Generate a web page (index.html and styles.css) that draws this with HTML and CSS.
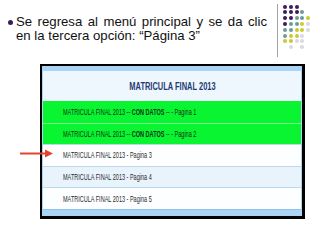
FILE: index.html
```html
<!DOCTYPE html>
<html lang="es">
<head>
<meta charset="utf-8">
<title>Página 3</title>
<link rel="stylesheet" href="styles.css">
</head>
<body>
<div class="slide">
  <div class="top">
    <div class="point">
      <span class="bullet"></span>
      <p class="text">Se regresa al menú principal y se da clic en la tercera opción: “Página 3”</p>
    </div>
    <div class="logo">
      <div class="dots">
        <span class="p"></span><span class="p"></span><span class="p"></span><span></span><span></span>
        <span class="p"></span><span class="p"></span><span class="p"></span><span class="t"></span><span></span>
        <span class="p"></span><span class="p"></span><span class="t"></span><span class="t"></span><span class="y"></span>
        <span class="p"></span><span class="t"></span><span class="t"></span><span class="y"></span><span class="g"></span>
        <span class="t"></span><span class="t"></span><span class="y"></span><span class="y"></span><span class="g"></span>
        <span class="t"></span><span class="y"></span><span class="y"></span><span class="g"></span><span></span>
        <span class="y"></span><span class="y"></span><span class="g"></span><span class="g"></span><span></span>
        <span></span><span class="g"></span><span></span><span class="g"></span><span></span>
      </div>
    </div>
  </div>
  <div class="shot">
    <div class="menu">
      <div class="strip"></div>
      <div class="title"><span>MATRICULA FINAL 2013</span></div>
      <div class="row green"><span class="lbl">MATRICULA FINAL 2013 -- <b>CON DATOS</b> -- - Pagina 1</span></div>
      <div class="row green"><span class="lbl">MATRICULA FINAL 2013 -- <b>CON DATOS</b> -- - Pagina 2</span></div>
      <div class="row"><span class="lbl">MATRICULA FINAL 2013 - Pagina 3</span></div>
      <div class="row alt"><span class="lbl">MATRICULA FINAL 2013 - Pagina 4</span></div>
      <div class="row"><span class="lbl">MATRICULA FINAL 2013 - Pagina 5</span></div>
      <div class="strip bottom"></div>
    </div>
  </div>
  <svg class="arrow" width="38" height="11" viewBox="0 0 38 11">
    <line x1="2" y1="5.5" x2="29" y2="5.5" stroke="#e5432b" stroke-width="2"/>
    <polygon points="35,5.5 27,1.5 27,9.5" fill="#e5432b"/>
  </svg>
</div>
</body>
</html>
```

FILE: styles.css
```css
body {
  margin: 0;
  width: 320px;
  height: 240px;
  overflow: hidden;
  background: #ffffff;
  font-family: "Liberation Sans", Arial, sans-serif;
}

.slide {
  position: relative;
  width: 320px;
  height: 240px;
}

.top {
  display: flex;
  height: 58px;
}

.point {
  display: flex;
  align-items: flex-start;
  padding: 15px 0 0 8px;
}

.bullet {
  flex: none;
  width: 5px;
  height: 5px;
  border-radius: 50%;
  background: #3d1b5b;
  margin: 5px 3px 0 0;
}

.text {
  margin: 0;
  width: 251px;
  font-size: 13.2px;
  line-height: 14px;
  text-align: justify;
  color: #111111;
}

.logo {
  margin: 4px 0 0 10px;
  height: 53px;
  border-left: 1px solid #a3a3a3;
  padding-left: 5px;
}

.dots {
  display: grid;
  grid-template-columns: repeat(5, 4px);
  grid-auto-rows: 4px;
  gap: 1.8px 1.75px;
  margin-top: 0.7px;
}

.dots span {
  width: 4px;
  height: 4px;
  border-radius: 50%;
}

.dots .p { background: #3d1b5b; }
.dots .t { background: #6b9c9c; }
.dots .y { background: #c9c934; }
.dots .g { background: #d9d9e3; }

.shot {
  margin: 6px 0 0 40px;
  width: 260px;
  border: 2px solid #000000;
  border-right-width: 3px;
  border-bottom-width: 3px;
}

.menu {
  border-left: 1px solid #a9d4f2;
  border-right: 1px solid #a9d4f2;
}

.strip {
  height: 5px;
  background: #a9d4f5;
}

.strip.bottom {
  height: 6px;
  border-top: 1px solid #8fc3ea;
}

.title {
  height: 30px;
  display: flex;
  align-items: center;
  justify-content: center;
  background: #eef7fe;
}

.title span {
  display: inline-block;
  white-space: nowrap;
  font-weight: bold;
  font-size: 11px;
  color: #1f3b73;
  transform: scaleX(0.68);
}

.row {
  box-sizing: border-box;
  height: 21.6px;
  display: flex;
  align-items: center;
  padding-left: 20px;
  background: #fdfeff;
  border-top: 1px solid #bcd8ec;
}

.title + .row {
  border-top: 0;
}

.row.green {
  background: #0af531;
  border-top-color: #7cf58c;
}

.row.alt {
  background: #e9f3fc;
}

.lbl {
  display: inline-block;
  white-space: nowrap;
  font-size: 8.5px;
  color: #2b2b2b;
  transform: scaleX(0.65);
  transform-origin: left center;
}

.green .lbl {
  color: #153015;
}

.arrow {
  position: absolute;
  left: 18px;
  top: 148px;
}
```
